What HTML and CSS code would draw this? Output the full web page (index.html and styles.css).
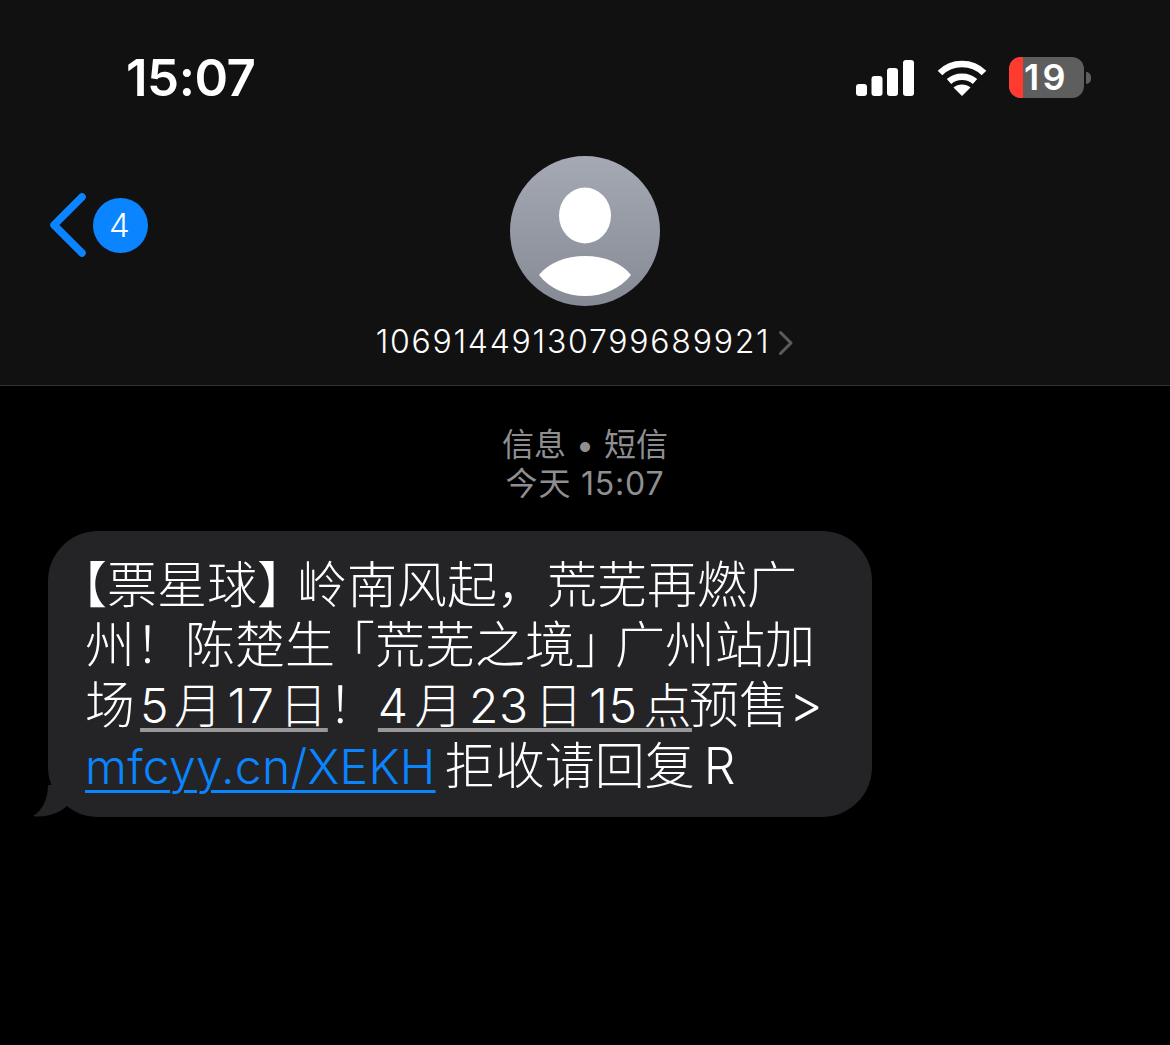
FILE: index.html
```html
<!DOCTYPE html>
<html lang="zh-CN">
<head>
<meta charset="utf-8">
<title>信息</title>
<link rel="stylesheet" href="styles.css">
</head>
<body>
<header class="head">
  <div class="status">
    <div class="time">15:07</div>
    <div class="indicators">
      <svg class="signal" width="58" height="36" viewBox="0 0 58 36"><g fill="#fff"><rect x="0" y="24" width="11" height="12" rx="3"/><rect x="15.500" y="16" width="11" height="20" rx="3"/><rect x="31" y="8" width="11" height="28" rx="3"/><rect x="47" y="0" width="11" height="36" rx="3"/></g></svg>
      <svg class="wifi" width="50" height="36" viewBox="0 0 50 36"><g fill="none" stroke="#fff" stroke-width="6.500"><path d="M3 13C15 1 35 1 47 13"/><path d="M12 21.500C19 15 31 15 38 21.500"/></g><path d="M25 36L16.500 27.500C21 23.500 29 23.500 33.500 27.500Z" fill="#fff"/></svg>
      <div class="battery">
        <div class="batt-body"><span class="batt-level"></span><span class="batt-num">19</span></div>
        <span class="batt-cap"></span>
      </div>
    </div>
  </div>
  <div class="nav">
    <div class="back">
      <svg width="40" height="66" viewBox="0 0 40 66"><path d="M34 5L6 33L34 61" fill="none" stroke="#0a84ff" stroke-width="7.500" stroke-linecap="round" stroke-linejoin="round"/></svg>
      <span class="badge">4</span>
    </div>
    <div class="contact">
      <svg class="avatar" width="150" height="150" viewBox="0 0 150 150">
        <defs><linearGradient id="av" x1="0" y1="0" x2="0" y2="1"><stop offset="0" stop-color="#a5a9b4"/><stop offset="1" stop-color="#868a94"/></linearGradient></defs>
        <circle cx="75" cy="75" r="75" fill="url(#av)"/>
        <ellipse cx="75" cy="59.500" rx="26" ry="28" fill="#fff"/>
        <path d="M29 119C38 107 56 100 75 100C94 100 112 107 121 119C110 133 93 140 75 140C57 140 40 133 29 119Z" fill="#fff"/>
      </svg>
      <div class="name-row">
        <span class="name">10691449130799689921</span>
        <svg width="16" height="26" viewBox="0 0 16 26"><path d="M2.500 2.500L13 13L2.500 23.500" fill="none" stroke="#5c5c5e" stroke-width="3" stroke-linecap="round" stroke-linejoin="round"/></svg>
      </div>
    </div>
  </div>
</header>
<main class="chat">
  <div class="meta">
    <div class="meta-kind">信息 • 短信</div>
    <div class="meta-time">今天 15:07</div>
  </div>
  <div class="bubble">
    <div class="line"><span class="open-lg">【</span>票星球<span class="close">】</span>岭南风起，荒芜再燃广</div>
    <div class="line">州！陈楚生<span class="open">「</span>荒芜之境<span class="close">」</span>广州站加</div>
    <div class="line tight">场 <span class="date">5 月 17 日</span>！ <span class="date date-last">4 月 23 日 15 点</span>预售<span class="gt">&gt;</span></div>
    <div class="line url-line"><span class="link">mfcyy.cn/XEKH</span> 拒收请回复 R</div>
    <svg class="tail" width="50" height="32" viewBox="0 0 50 32"><path d="M16 0C16 14 10 26 1 31C12 33 27 29 36 20L50 0Z" fill="#242427"/></svg>
  </div>
</main>
</body>
</html>
```
FILE: styles.css
```css
* { box-sizing: border-box; }
html, body { margin: 0; padding: 0; }
body {
  width: 1170px;
  height: 1045px;
  background: #000;
  color: #fff;
  font-family: Inter, "Noto Sans CJK SC", sans-serif;
  overflow: hidden;
}
.head {
  height: 386px;
  background: #111112;
  border-bottom: 1px solid #333335;
}
.status {
  display: flex;
  justify-content: space-between;
  align-items: center;
  height: 156px;
  padding: 0 79px 0 126px;
}
.time {
  font-size: 51px;
  font-weight: 600;
  line-height: 58px;
  letter-spacing: -0.5px;
}
.indicators {
  display: flex;
  align-items: center;
  gap: 22px;
}
.signal { display: block; margin-right: 1px; }
.wifi { display: block; }
.battery { display: flex; align-items: center; gap: 2px; margin-top: -1px; }
.batt-body {
  position: relative;
  width: 75px;
  height: 41px;
  border-radius: 12px;
  background: #5e5e5e;
  display: flex;
  align-items: center;
  justify-content: center;
}
.batt-level {
  position: absolute;
  left: 0;
  top: 0;
  bottom: 0;
  width: 14px;
  background: #ff3b30;
  border-radius: 12px 0 0 12px;
}
.batt-num {
  position: relative;
  font-size: 36px;
  font-weight: 600;
  line-height: 41px;
  letter-spacing: 3.500px;
  color: #fff;
}
.batt-cap {
  width: 5px;
  height: 12px;
  background: #5e5e5e;
  border-radius: 0 6px 6px 0;
}
.nav {
  position: relative;
  display: flex;
  justify-content: center;
}
.back {
  position: absolute;
  left: 48px;
  top: 36px;
  display: flex;
  align-items: center;
  gap: 5px;
}
.back svg { display: block; }
.badge {
  width: 55px;
  height: 55px;
  border-radius: 50%;
  background: #0a84ff;
  display: flex;
  align-items: center;
  justify-content: center;
  font-size: 33px;
  font-weight: 300;
  padding-right: 2px;
}
.contact {
  display: flex;
  flex-direction: column;
  align-items: center;
}
.avatar { display: block; }
.name-row {
  display: flex;
  align-items: center;
  gap: 8px;
  margin-top: 16px;
}
.name {
  font-size: 32px;
  line-height: 40px;
  letter-spacing: 1.750px;
  font-weight: 300;
  color: #fff;
}
.name-row svg { display: block; margin-top: 2px; }
.chat { padding: 39px 0 0 48px; }
.meta {
  margin-left: -48px;
  text-align: center;
  color: #8f8f92;
  font-size: 32px;
  line-height: 39px;
}
.meta-kind { word-spacing: 1px; }
.meta-time { letter-spacing: 0.800px; }
.bubble {
  position: relative;
  width: 824px;
  height: 286px;
  margin-top: 28px;
  padding: 24px 0 0 37px;
  background: #242427;
  border-radius: 50px;
}
.line {
  font-size: 50px;
  line-height: 60px;
  white-space: nowrap;
  font-weight: 300;
}
.tight { word-spacing: -13px; }
.url-line { word-spacing: -5px; }
.open-lg { margin-left: -28px; }
.open { margin-left: -10px; }
.close { margin-right: -10px; }
.date {
  margin-left: 4px;
  font-size: 48px;
  letter-spacing: 0.500px;
  word-spacing: -9px;
  text-decoration: underline;
  text-decoration-color: #98989a;
  text-decoration-thickness: 4px;
  text-underline-offset: 5px;
  text-decoration-skip-ink: none;
}
.date-last { margin-left: -1px; margin-right: -3px; word-spacing: -8px; }
.gt { font-size: 52px; }
.link {
  color: #0a84ff;
  font-size: 48px;
  letter-spacing: 0.300px;
  text-decoration: underline;
  text-decoration-thickness: 3px;
  text-underline-offset: 6px;
}
.tail {
  position: absolute;
  left: -16px;
  bottom: 0;
  display: block;
}
```
